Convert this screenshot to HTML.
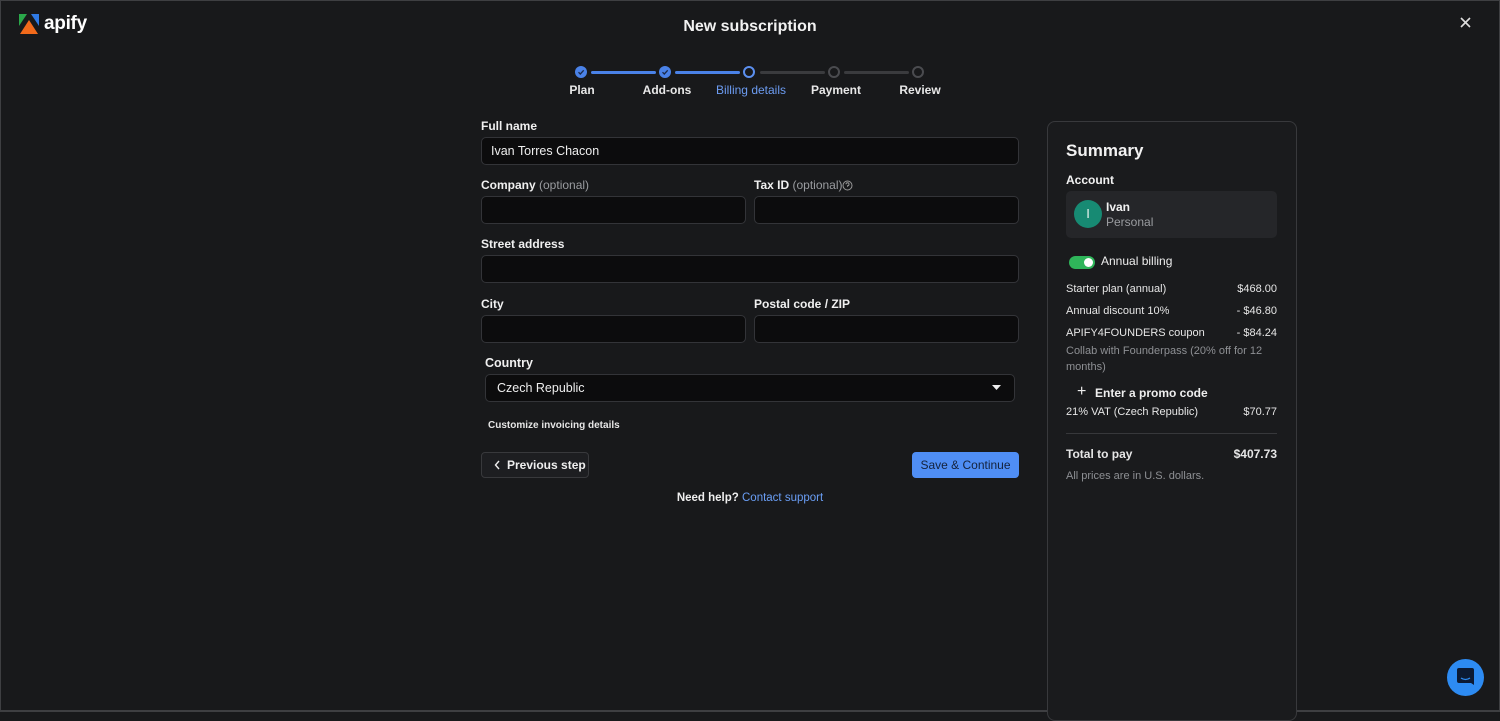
<!DOCTYPE html>
<html><head><meta charset="utf-8">
<style>
*{box-sizing:border-box;margin:0;padding:0}
html,body{width:1500px;height:712px;overflow:hidden;background:#18191b;font-family:"Liberation Sans",sans-serif;color:#f2f2f2}
.frame{position:absolute;left:0;top:0;width:1500px;height:712px;border:1px solid #3e3f42;border-bottom-width:2px}
.a{position:absolute;white-space:nowrap}
.lbl{position:absolute;font-size:12px;font-weight:bold;color:#f0f0f0;white-space:nowrap}
.lbl span{font-weight:normal;color:#9a9ca0}
.inp{position:absolute;height:28px;background:#0c0c0d;border:1px solid #333438;border-radius:5px;font-size:12.5px;color:#eee;padding-left:9px;line-height:26px}
.dot{position:absolute;width:12px;height:12px;border-radius:50%}
.line{position:absolute;height:3px;top:71px;border-radius:2px}
.st{position:absolute;top:83px;font-size:12px;font-weight:bold;color:#e8e8e8;text-align:center;width:100px}
.row{position:absolute;left:1066px;width:211px;font-size:11px;color:#e6e6e6;display:flex;justify-content:space-between}
</style></head><body>
<div class="frame"></div>
<svg class="a" style="left:19px;top:14px" width="20" height="20" viewBox="0 0 20 20">
<polygon points="0,0 8,0 0,12" fill="#2aa84a"/><polygon points="12,0 20,0 20,12" fill="#2f7ae5"/><polygon points="10,6 19,20 1,20" fill="#f26a1b"/></svg>
<div class="a" style="left:44px;top:13px;font-size:19px;font-weight:bold;color:#fff;letter-spacing:-0.3px">apify</div>
<div class="a" style="left:0;width:1500px;top:18px;text-align:center;font-size:16px;font-weight:bold;color:#f2f2f2">New subscription</div>
<svg class="a" style="left:1460px;top:17px" width="11" height="11" viewBox="0 0 11 11"><path d="M1 1L10 10M10 1L1 10" stroke="#ddd" stroke-width="1.6"/></svg>

<div class="line" style="left:591px;width:65px;background:#4a82e8"></div>
<div class="line" style="left:675px;width:65px;background:#4a82e8"></div>
<div class="line" style="left:760px;width:65px;background:#3a3b3e"></div>
<div class="line" style="left:844px;width:65px;background:#3a3b3e"></div>
<div class="dot" style="left:575px;top:66px;background:#4a82e8"></div>
<div class="dot" style="left:659px;top:66px;background:#4a82e8"></div>
<svg class="a" style="left:575px;top:66px" width="12" height="12"><path d="M3.5 6.2L5.3 8L8.7 4.3" stroke="#1b2a4a" stroke-width="1.3" fill="none"/></svg>
<svg class="a" style="left:659px;top:66px" width="12" height="12"><path d="M3.5 6.2L5.3 8L8.7 4.3" stroke="#1b2a4a" stroke-width="1.3" fill="none"/></svg>
<div class="dot" style="left:743px;top:66px;border:2px solid #5b8fef"></div>
<div class="dot" style="left:828px;top:66px;border:2px solid #4a4b4f"></div>
<div class="dot" style="left:912px;top:66px;border:2px solid #4a4b4f"></div>
<div class="st" style="left:532px">Plan</div>
<div class="st" style="left:617px">Add-ons</div>
<div class="st" style="left:701px;color:#6c9cf2;font-weight:normal">Billing details</div>
<div class="st" style="left:786px">Payment</div>
<div class="st" style="left:870px">Review</div>

<div class="lbl" style="left:481px;top:119px">Full name</div>
<div class="inp" style="left:481px;top:137px;width:538px">Ivan Torres Chacon</div>
<div class="lbl" style="left:481px;top:178px">Company <span>(optional)</span></div>
<div class="inp" style="left:481px;top:196px;width:265px"></div>
<div class="lbl" style="left:754px;top:178px">Tax ID <span>(optional)</span></div>
<svg class="a" style="left:842px;top:180px" width="11" height="11"><circle cx="5.5" cy="5.5" r="4.5" stroke="#999" fill="none"/><path d="M4 4.3a1.5 1.5 0 1 1 1.5 1.5v1" stroke="#999" fill="none"/></svg>
<div class="inp" style="left:754px;top:196px;width:265px"></div>
<div class="lbl" style="left:481px;top:237px">Street address</div>
<div class="inp" style="left:481px;top:255px;width:538px"></div>
<div class="lbl" style="left:481px;top:297px">City</div>
<div class="inp" style="left:481px;top:315px;width:265px"></div>
<div class="lbl" style="left:754px;top:297px">Postal code / ZIP</div>
<div class="inp" style="left:754px;top:315px;width:265px"></div>
<div class="lbl" style="left:485px;top:356px;font-size:12.5px">Country</div>
<div class="inp" style="left:485px;top:374px;width:530px;padding-left:11px">Czech Republic</div>
<svg class="a" style="left:992px;top:385px" width="10" height="6"><path d="M0 0H9L4.5 5z" fill="#eee"/></svg>
<div class="a" style="left:488px;top:420px;font-size:10px;font-weight:bold;color:#e6e6e6">Customize invoicing details</div>
<div class="a" style="left:481px;top:452px;width:108px;height:26px;border:1px solid #38393c;border-radius:4px;background:#1d1e21;font-size:12px;font-weight:bold;color:#eee;line-height:24px;padding-left:25px">Previous step</div>
<svg class="a" style="left:494px;top:460px" width="7" height="10"><path d="M5 1L1.5 5L5 9" stroke="#eee" stroke-width="1.4" fill="none"/></svg>
<div class="a" style="left:912px;top:452px;width:107px;height:26px;border-radius:4px;background:#4f8ef5;font-size:12px;color:#14223c;line-height:26px;text-align:center">Save &amp; Continue</div>
<div class="a" style="left:0;width:1500px;top:492px;text-align:center;font-size:11.5px;font-weight:bold;color:#eee">Need help? <span style="color:#6a9ef5;font-weight:normal">Contact support</span></div>

<div class="a" style="left:1047px;top:121px;width:250px;height:600px;border:1px solid #38393c;border-radius:8px;background:#1a1b1d"></div>
<div class="a" style="left:1066px;top:141px;font-size:17px;font-weight:bold;color:#f2f2f2">Summary</div>
<div class="a" style="left:1066px;top:173px;font-size:12px;font-weight:bold">Account</div>
<div class="a" style="left:1066px;top:191px;width:211px;height:47px;background:#252629;border-radius:5px"></div>
<div class="a" style="left:1074px;top:200px;width:28px;height:28px;border-radius:50%;background:#178a73;color:#e8f5f0;font-size:13px;text-align:center;line-height:28px">I</div>
<div class="a" style="left:1106px;top:200px;font-size:12px;font-weight:bold">Ivan</div>
<div class="a" style="left:1106px;top:215px;font-size:12px;color:#9a9ca0">Personal</div>
<div class="a" style="left:1069px;top:256px;width:26px;height:13px;border-radius:7px;background:#2fb55a"></div>
<div class="a" style="left:1084px;top:258px;width:9px;height:9px;border-radius:50%;background:#fff"></div>
<div class="a" style="left:1101px;top:254px;font-size:12px;color:#eee">Annual billing</div>
<div class="row" style="top:283px"><span>Starter plan (annual)</span><span>$468.00</span></div>
<div class="row" style="top:305px"><span>Annual discount 10%</span><span>- $46.80</span></div>
<div class="row" style="top:327px"><span>APIFY4FOUNDERS coupon</span><span>- $84.24</span></div>
<div class="a" style="left:1066px;top:343px;width:205px;font-size:11px;line-height:16px;color:#8e9094;white-space:normal">Collab with Founderpass (20% off for 12 months)</div>
<div class="a" style="left:1077px;top:383px;font-size:16px;color:#eee">+</div>
<div class="a" style="left:1095px;top:386px;font-size:12px;font-weight:bold;color:#eee">Enter a promo code</div>
<div class="row" style="top:406px"><span>21% VAT (Czech Republic)</span><span>$70.77</span></div>
<div class="a" style="left:1066px;top:433px;width:211px;height:1px;background:#37383b"></div>
<div class="row" style="top:447px;font-weight:bold;font-size:12px"><span>Total to pay</span><span>$407.73</span></div>
<div class="a" style="left:1066px;top:470px;font-size:11px;color:#8e9094">All prices are in U.S. dollars.</div>

<div class="a" style="left:1447px;top:659px;width:37px;height:37px;border-radius:50%;background:#2d8bf2"></div>
<svg class="a" style="left:1456px;top:667px" width="19" height="20" viewBox="0 0 19 20"><path d="M3 1h13a2 2 0 0 1 2 2v15l-3-2H3a2 2 0 0 1-2-2V3a2 2 0 0 1 2-2z" fill="#0c1a33"/><path d="M5 11q4.5 3 9 0" stroke="#2d8bf2" stroke-width="1.3" fill="none"/></svg>
</body></html>
